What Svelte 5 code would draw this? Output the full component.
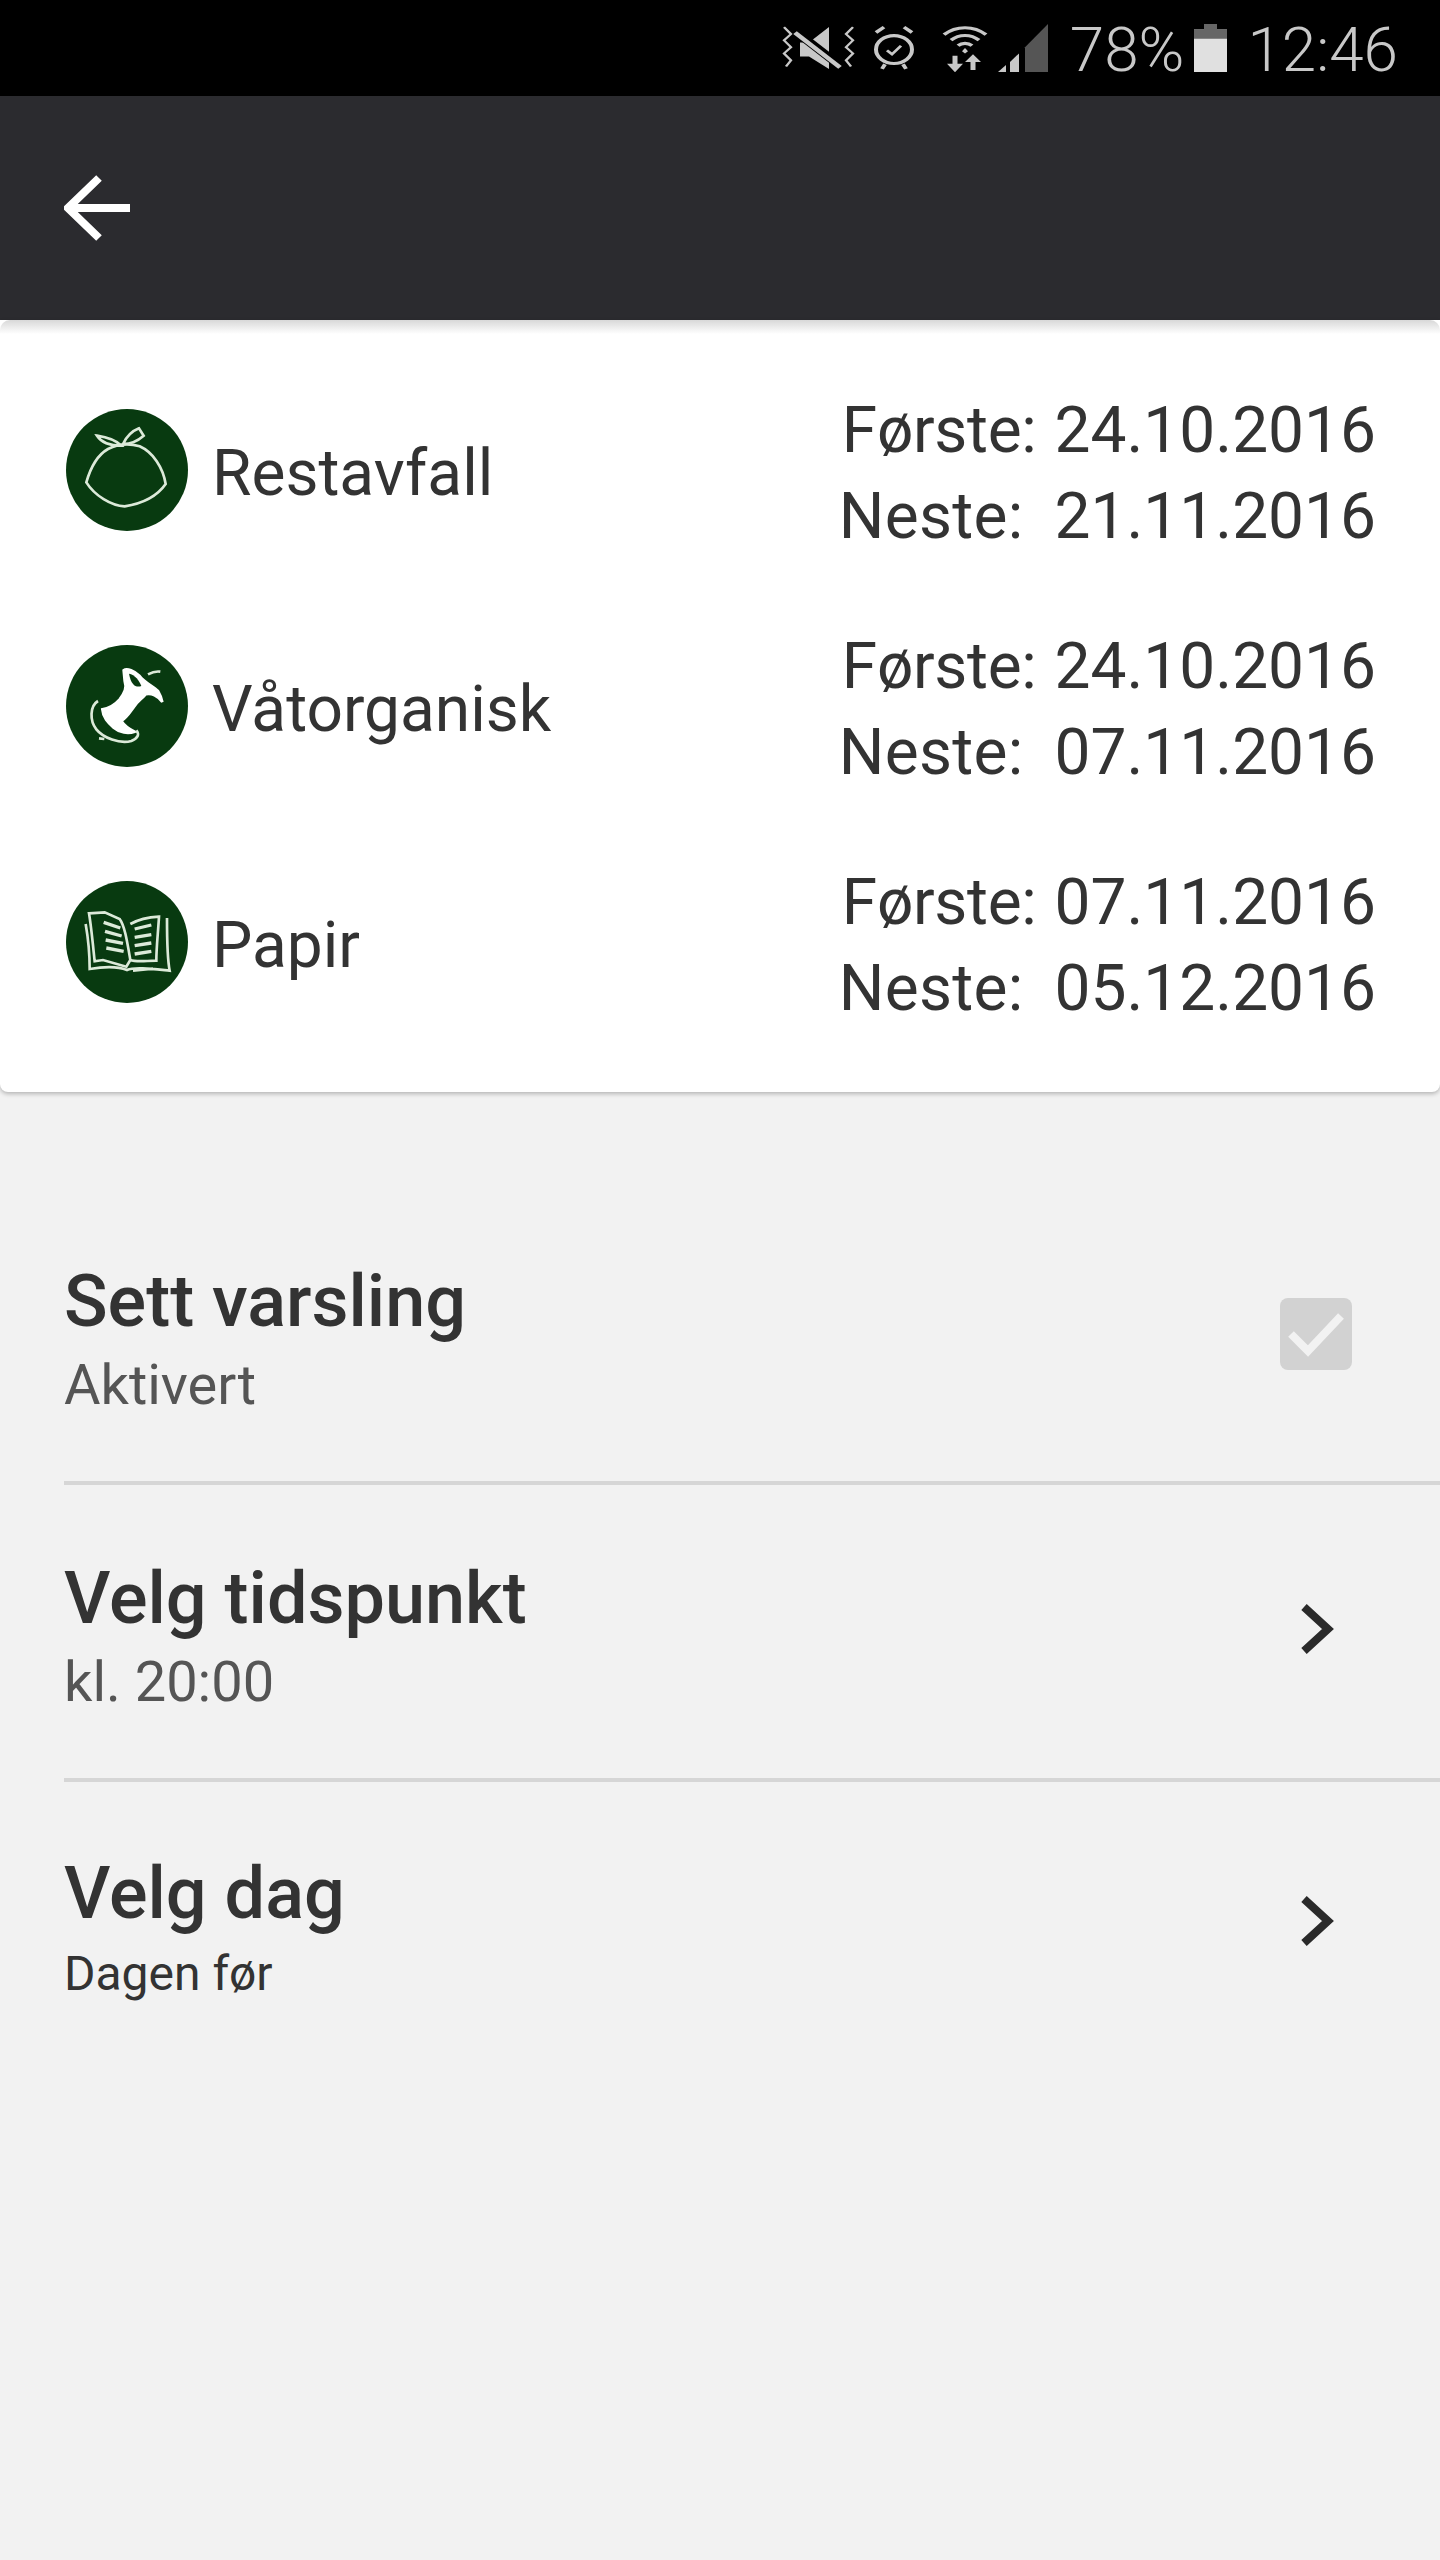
<script>
	const schedule = [
		{ name: 'Restavfall', icon: 'rest', first: '24.10.2016', next: '21.11.2016' },
		{ name: 'Våtorganisk', icon: 'organic', first: '24.10.2016', next: '07.11.2016' },
		{ name: 'Papir', icon: 'paper', first: '07.11.2016', next: '05.12.2016' }
	];
</script>

<div class="screen">
	<div class="statusbar">
		<svg width="74" height="48" viewBox="0 0 74 62" preserveAspectRatio="none" fill="none">
			<path d="M2 4l7 9-7 8 7 9-7 8 7 9-5 8M71 4l-7 9 7 8-7 9 7 8-7 9 5 8" stroke="#c8c8c8" stroke-width="2.5" />
			<path d="M18 24h9L47 4v54L27 42H18z" fill="#c8c8c8" />
			<path d="M14 10l44 44" stroke="#000" stroke-width="10" />
			<path d="M13 11l45 45" stroke="#c8c8c8" stroke-width="5" />
		</svg>
		<svg class="st-alarm" width="44" height="48" viewBox="0 0 44 62" preserveAspectRatio="none" fill="none" stroke="#c8c8c8">
			<circle cx="22" cy="33" r="18" stroke-width="4" />
			<path d="M4 11l8-7M40 11l-8-7M10 58l3-6M34 58l-3-6" stroke-width="4" />
			<path d="M15 34l5 5 9-11" stroke-width="3" />
		</svg>
		<svg class="st-wifi" width="46" height="50" viewBox="0 0 46 64" preserveAspectRatio="none" fill="none" stroke="#c8c8c8">
			<path d="M2 15C14 3 32 3 44 15M9 22c8-8 20-8 28 0M16 29c4-4 10-4 14 0" stroke-width="4" />
			<path d="M23 32l-3 4 3 3 3-3z" fill="#c8c8c8" stroke="none" />
			<path d="M5 52l8 11 8-11zM23 50l8-10 8 10z" fill="#c8c8c8" stroke-width="0" />
			<path d="M13 42v14M31 60V46" stroke-width="5" />
		</svg>
		<svg class="st-signal" width="50" height="48" viewBox="0 0 50 62" preserveAspectRatio="none">
			<path d="M0 62L8 53V62z" fill="#c8c8c8" />
			<path d="M12 62V49L21 38V62z" fill="#c8c8c8" />
			<path d="M27 62V30L50 0V62z" fill="#555" />
		</svg>
		<span class="st-pct">78%</span>
		<svg class="st-battery" width="33" height="48" viewBox="0 0 33 62" preserveAspectRatio="none">
			<path d="M10 0h13v7h10v55H0V7h10z" fill="#e0e0e0" />
			<path d="M10 0h13v7h10v12H0V7h10z" fill="#666" />
		</svg>
		<span class="st-time">12:46</span>
	</div>

	<header class="toolbar">
		<svg width="66" height="66" viewBox="0 0 66 66" fill="none" stroke="#fff" stroke-width="8">
			<path d="M66 33H4M35 3L4 33l31 30" />
		</svg>
	</header>

	<section class="card">
		{#each schedule as row}
			<div class="row">
				<svg class="badge" width="122" height="122" viewBox="79 85 366 366" fill="none" stroke="#dcead9">
					<circle cx="262" cy="268" r="183" fill="#083a10" stroke="none" />
					{#if row.icon === 'rest'}
						<g stroke-width="8">
							<path d="M205 205C170 225 150 270 140 305 165 345 215 375 255 377 300 370 350 350 378 310 370 260 340 215 300 197 270 188 235 190 205 205Z" />
							<path d="M245 195C230 180 205 170 172 165 185 185 210 195 245 195ZM250 190C262 165 280 150 298 143L312 165C295 180 275 190 250 190Z" />
						</g>
					{:else if row.icon === 'organic'}
						<g transform="translate(0 13)" stroke-width="8">
							<path d="M252 148C262 140 285 150 300 165 315 185 340 195 355 210 362 222 366 232 368 243 355 225 335 215 318 220 305 235 295 240 285 255 270 275 262 290 245 300 255 315 270 325 285 332 265 340 240 335 222 320 205 305 190 290 188 265 205 262 225 252 240 235 255 215 262 200 255 180Z" fill="#fff" stroke="#fff" stroke-width="8" />
							<path d="M268 158C285 160 300 180 305 195 290 200 275 195 268 158Z" fill="#083a10" stroke="none" />
							<path d="M175 240C150 255 150 300 170 325 190 350 240 370 275 360 295 352 300 340 290 328M325 160C340 152 350 150 362 152M178 352l16 2" />
						</g>
					{:else}
						<g transform="translate(0 24)" stroke-width="8">
							<path d="M148 158L195 155 240 175C255 195 262 240 272 298L260 318 190 298 165 302C160 255 155 200 148 158ZM272 190C290 180 320 170 358 168 355 220 350 260 350 300 320 300 290 305 272 298" />
							<path d="M138 190C145 230 150 280 150 325 190 318 230 315 262 328 285 318 340 325 390 330 382 290 382 220 382 172M280 330l60-6" />
							<path d="M192 185l50 17M196 212l50 14M198 238l52 10M200 262l52 10M285 205l50-12M285 230l50-8M285 255l50-8M285 280l50-8" stroke-width="10" />
						</g>
					{/if}
				</svg>
				<span class="row-name">{row.name}</span>
				<div class="dates">
					<span class="lbl first">Første:</span><span>{row.first}</span>
					<span class="lbl next">Neste:</span><span>{row.next}</span>
				</div>
			</div>
		{/each}
	</section>

	<ul class="settings">
		<li class="item">
			<div>
				<h3>Sett varsling</h3>
				<p>Aktivert</p>
			</div>
			<div class="checkbox">
				<svg width="72" height="72" viewBox="0 0 72 72" fill="none" stroke="#f2f2f2" stroke-width="8">
					<path d="M11 36l17 17 33-35" />
				</svg>
			</div>
		</li>
		<li class="item">
			<div>
				<h3>Velg tidspunkt</h3>
				<p>kl. 20:00</p>
			</div>
			<svg class="chevron" width="36" height="50" viewBox="0 0 36 50" fill="none" stroke="#2a2a2a" stroke-width="8">
				<path d="M5 3l24 22L5 47" />
			</svg>
		</li>
		<li class="item last">
			<div>
				<h3>Velg dag</h3>
				<p class="dark">Dagen før</p>
			</div>
			<svg class="chevron" width="36" height="50" viewBox="0 0 36 50" fill="none" stroke="#2a2a2a" stroke-width="8">
				<path d="M5 3l24 22L5 47" />
			</svg>
		</li>
	</ul>
</div>

<style>
	:global(body) {
		margin: 0;
		background: #f2f2f2;
	}

	.screen {
		width: 1440px;
		height: 2560px;
		overflow: hidden;
		font-family: Roboto, "Liberation Sans", sans-serif;
		color: #333;
		background: #f2f2f2;
	}

	.statusbar {
		height: 96px;
		background: #000;
		display: flex;
		align-items: center;
		justify-content: flex-end;
		padding-right: 42px;
		box-sizing: border-box;
		color: #c8c8c8;
		font-weight: 300;
		font-size: 62px;
		line-height: 90px;
	}

	.statusbar svg {
		flex: none;
	}

	.statusbar span {
		padding-top: 3px;
	}

	.st-alarm {
		margin-left: 16px;
	}

	.st-wifi {
		margin-left: 26px;
	}

	.st-signal {
		margin-left: 10px;
	}

	.st-pct {
		margin-left: 22px;
	}

	.st-battery {
		margin-left: 10px;
	}

	.st-time {
		margin-left: 20px;
	}

	.toolbar {
		height: 224px;
		background: #2b2b2f;
		display: flex;
		align-items: center;
		padding-left: 64px;
		box-sizing: border-box;
	}

	.card {
		background: #fff;
		height: 772px;
		box-sizing: border-box;
		padding: 32px 64px 0 66px;
		border-radius: 0 0 8px 8px;
		box-shadow: 0 2px 4px rgba(0, 0, 0, 0.25);
		position: relative;
	}

	.card::before {
		content: '';
		position: absolute;
		left: 0;
		right: 0;
		top: 0;
		height: 14px;
		background: linear-gradient(#d8d8d8, #fff);
		border-radius: 10px 10px 0 0;
	}

	.row {
		height: 236px;
		display: flex;
		align-items: center;
	}

	.badge {
		flex: none;
	}

	.row-name {
		margin-left: 24px;
		font-size: 64px;
		flex: 1;
		padding-top: 6px;
	}

	.dates {
		display: grid;
		grid-template-columns: auto auto;
		column-gap: 18px;
		font-size: 64px;
		line-height: 86px;
		padding-top: 8px;
	}

	.lbl.first {
		text-align: right;
		letter-spacing: -0.3px;
	}

	.lbl.next {
		letter-spacing: 0.3px;
		margin-left: -3px;
	}

	.settings {
		list-style: none;
		margin: 0;
		padding: 96px 0 0 64px;
	}

	.item {
		height: 297px;
		box-sizing: border-box;
		border-bottom: 4px solid #d6d6d6;
		display: flex;
		justify-content: space-between;
		align-items: center;
		padding-right: 88px;
	}

	.item.last {
		height: 290px;
		border-bottom: none;
	}

	h3 {
		margin: 0;
		font-size: 72px;
		font-weight: 500;
		line-height: 100px;
	}

	.last h3 {
		line-height: 94px;
	}

	p {
		margin: 0;
		font-size: 56px;
		line-height: 66px;
		color: #555;
	}

	p.dark {
		font-size: 48px;
		color: #333;
	}

	.checkbox {
		width: 72px;
		height: 72px;
		background: #d2d2d2;
		border-radius: 8px;
		margin-bottom: 2px;
	}

	.chevron {
		margin-right: 17px;
		margin-bottom: 6px;
	}

	.last .chevron {
		margin-bottom: 12px;
	}
</style>
